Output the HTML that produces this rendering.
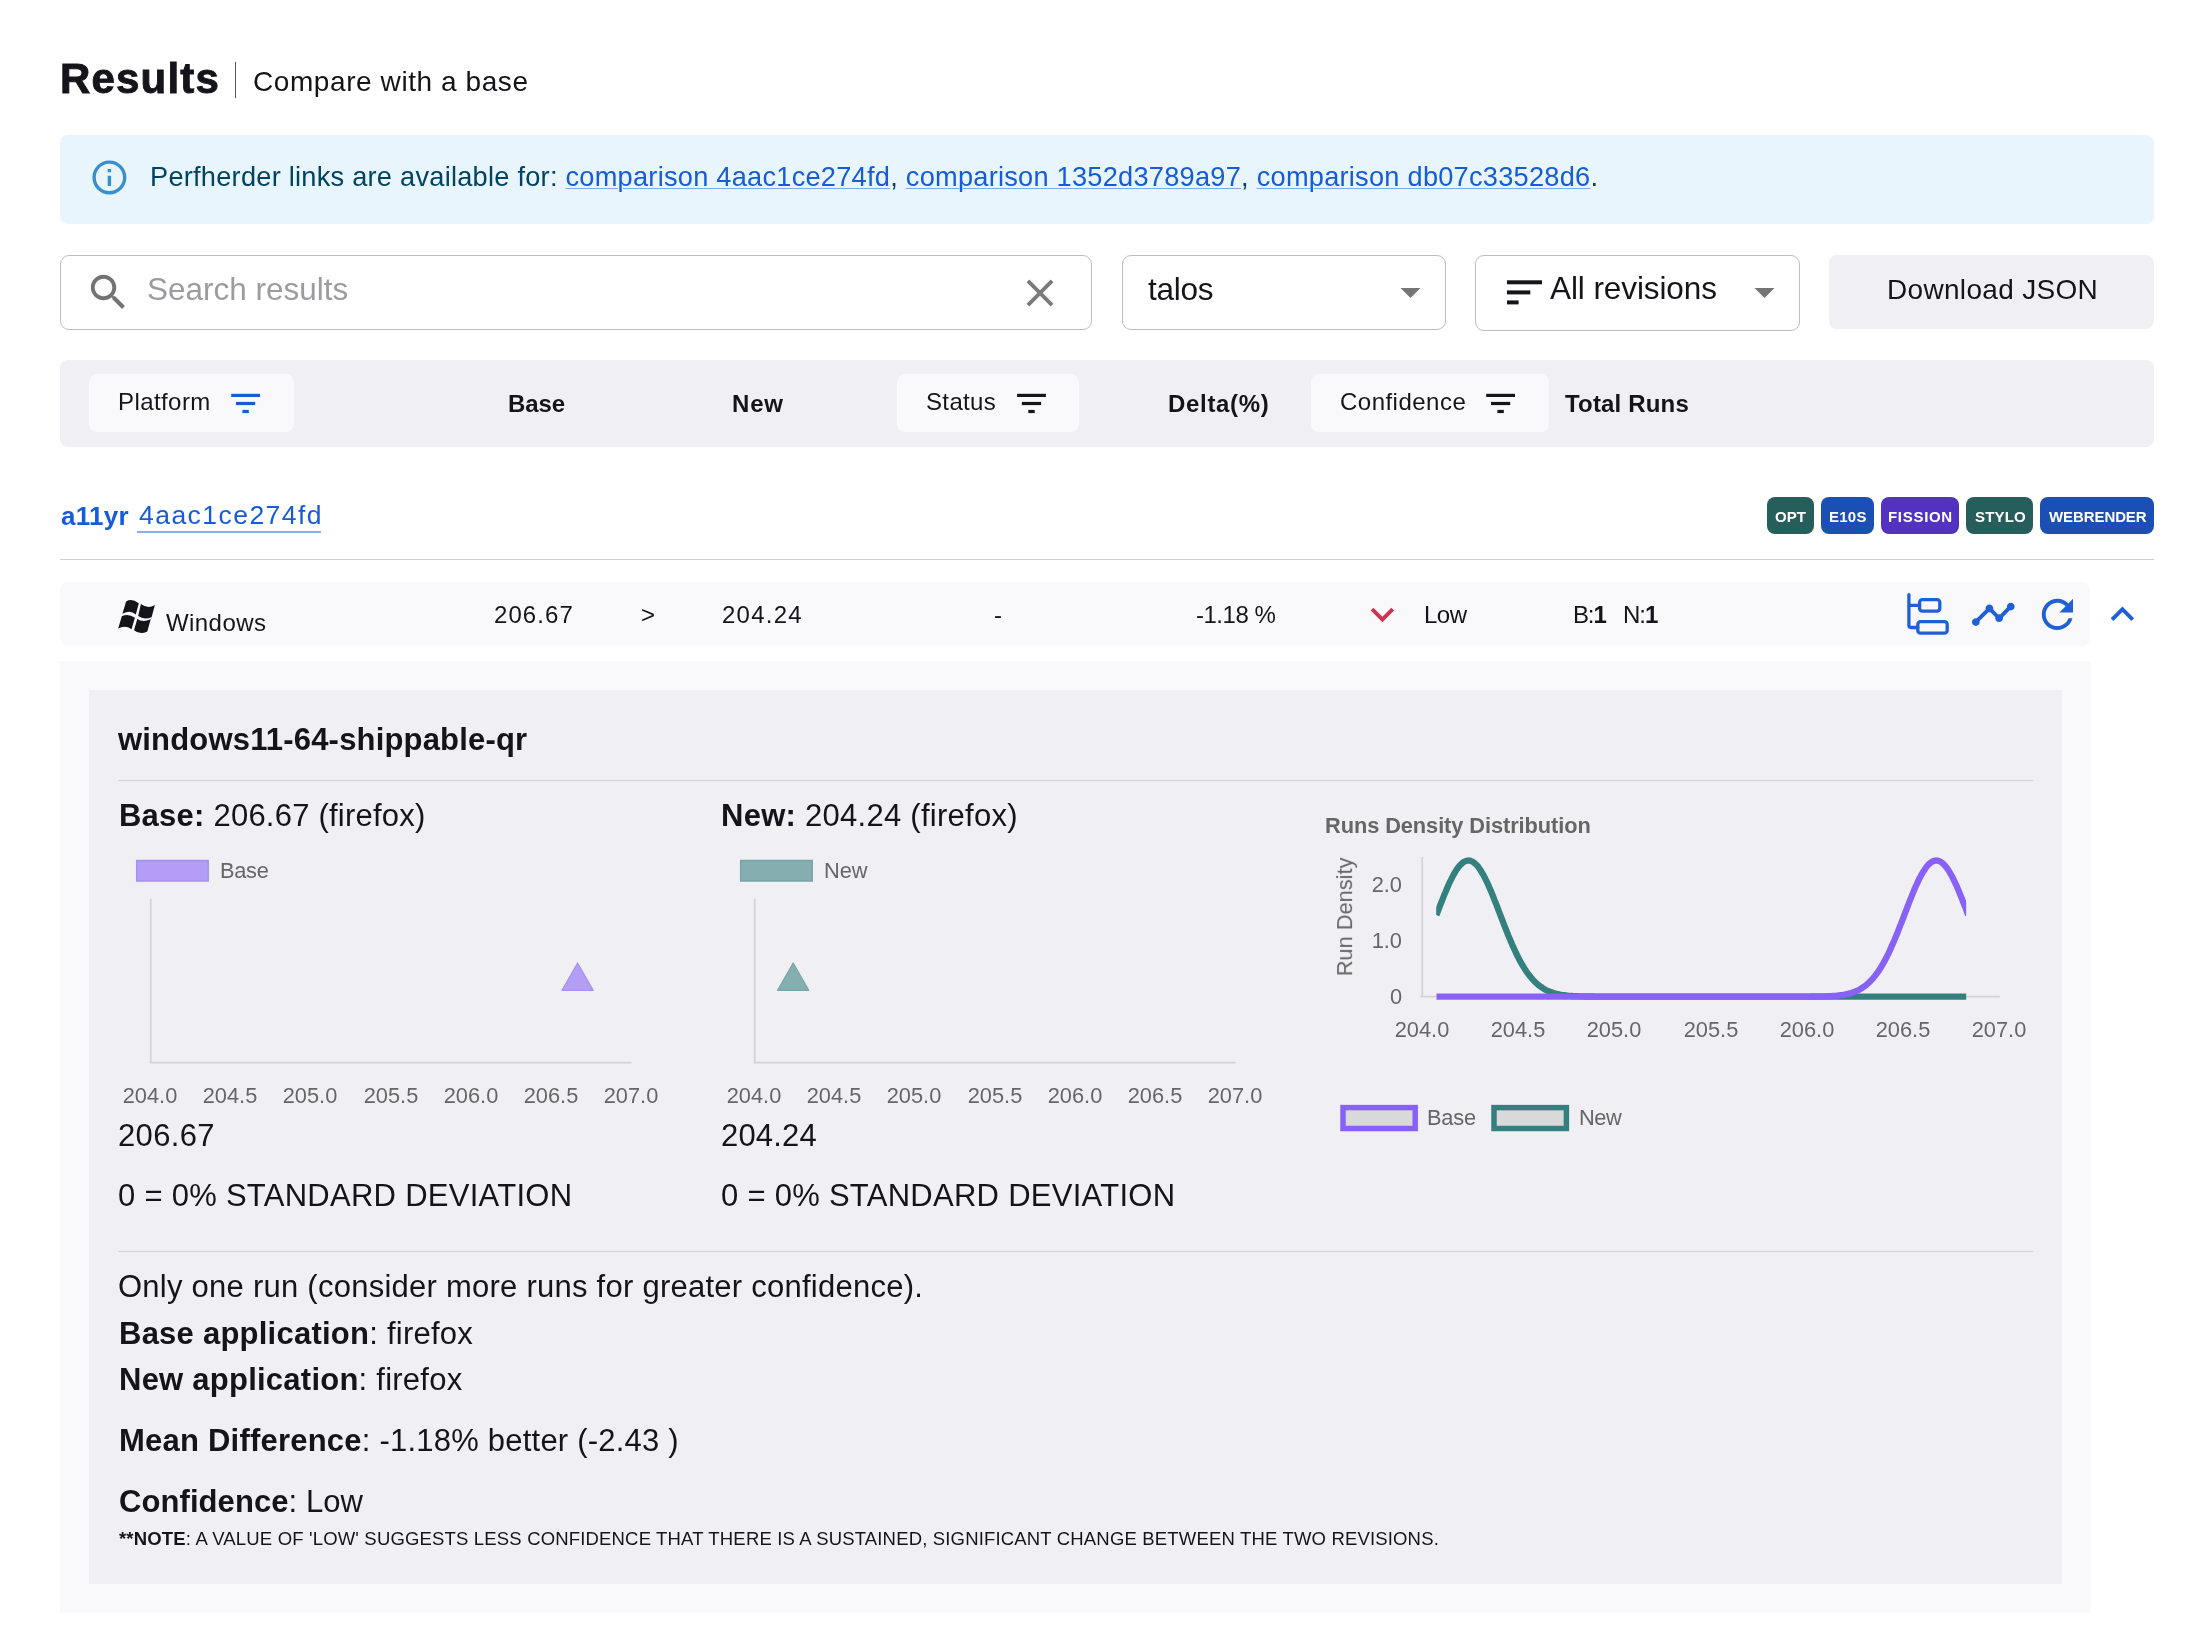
<!DOCTYPE html>
<html lang="en">
<head>
<meta charset="utf-8">
<title>Results - Compare with a base</title>
<style>
*{box-sizing:border-box;margin:0;padding:0}
html,body{width:2190px;height:1648px;background:#fff;overflow:hidden}
body{position:relative;font-family:"Liberation Sans",sans-serif;color:#15141a}
.b{position:absolute}
.t{position:absolute;white-space:nowrap;line-height:1;will-change:transform}
.tk{position:absolute;white-space:nowrap;line-height:1;will-change:transform;font-size:21.8px;color:#666;text-align:center;width:80px}
svg{position:absolute;overflow:visible}
</style>
</head>
<body>
<!-- title -->
<div class="b" style="left:234.9px;top:62px;width:1.4px;height:36px;background:#55555f"></div>
<!-- banner -->
<div class="b" style="left:60px;top:135px;width:2094px;height:89px;background:#e8f5fc;border-radius:8px"></div>
<svg style="left:88.6px;top:157.4px" width="40.8" height="40.8" viewBox="0 0 24 24"><path fill="#3a8ece" d="M11 7h2v2h-2zm0 4h2v6h-2zm1-9C6.48 2 2 6.48 2 12s4.48 10 10 10 10-4.48 10-10S17.52 2 12 2zm0 18c-4.41 0-8-3.59-8-8s3.59-8 8-8 8 3.59 8 8-3.59 8-8 8z"/></svg>
<!-- search row -->
<div class="b" style="left:60px;top:255px;width:1032px;height:74.5px;border:1.5px solid #bdbdc2;border-radius:9px"></div>
<svg style="left:85px;top:269.3px" width="46.8" height="46.8" viewBox="0 0 24 24"><path fill="#737373" d="M15.5 14h-.79l-.28-.27C15.41 12.59 16 11.11 16 9.5 16 5.91 13.09 3 9.5 3S3 5.91 3 9.5 5.91 16 9.5 16c1.61 0 3.09-.59 4.23-1.57l.27.28v.79l5 4.99L20.49 19zm-6 0C7.01 14 5 11.99 5 9.5S7.01 5 9.5 5 14 7.01 14 9.5 11.99 14 9.5 14z"/></svg>
<svg style="left:1017.2px;top:269.8px" width="46" height="46" viewBox="0 0 24 24"><path fill="#7a7a7a" d="M19 6.41 17.59 5 12 10.59 6.41 5 5 6.41 10.59 12 5 17.59 6.41 19 12 13.41 17.59 19 19 17.59 13.41 12z"/></svg>
<div class="b" style="left:1122px;top:255px;width:324px;height:74.5px;border:1.5px solid #bdbdc2;border-radius:9px"></div>
<svg style="left:0;top:0" width="2190" height="400"><polygon fill="#757575" points="1400.5,288 1420.5,288 1410.5,298"/><polygon fill="#757575" points="1754.5,288 1774.5,288 1764.5,298"/>
<rect x="1507" y="280.3" width="35" height="4" fill="#15141a"/><rect x="1507" y="290.4" width="23.3" height="4" fill="#15141a"/><rect x="1507" y="300.4" width="11.6" height="4" fill="#15141a"/></svg>
<div class="b" style="left:1475px;top:254.5px;width:325px;height:76px;border:1.5px solid #bdbdc2;border-radius:9px"></div>
<div class="b" style="left:1829px;top:255px;width:325px;height:73.7px;background:#f0f0f4;border-radius:8px"></div>
<!-- table header -->
<div class="b" style="left:60px;top:360px;width:2094px;height:87px;background:#f0f0f4;border-radius:8px"></div>
<div class="b" style="left:89px;top:374.2px;width:204.8px;height:57.8px;background:#f9f9fb;border-radius:8px"></div>
<div class="b" style="left:897px;top:374.2px;width:182px;height:57.8px;background:#f9f9fb;border-radius:8px"></div>
<div class="b" style="left:1311px;top:374.2px;width:238px;height:57.8px;background:#f9f9fb;border-radius:8px"></div>
<svg style="left:0;top:0" width="2190" height="450">
<g fill="#165cd6"><rect x="231.2" y="393.8" width="28.8" height="3.2"/><rect x="236" y="401.9" width="19.2" height="3.2"/><rect x="242.4" y="409.9" width="6.4" height="3.2"/></g>
<g fill="#15141a"><rect x="1017.1" y="393.8" width="28.8" height="3.2"/><rect x="1021.9" y="401.9" width="19.2" height="3.2"/><rect x="1028.3" y="409.9" width="6.4" height="3.2"/>
<rect x="1486.2" y="393.8" width="28.8" height="3.2"/><rect x="1491" y="401.9" width="19.2" height="3.2"/><rect x="1497.4" y="409.9" width="6.4" height="3.2"/></g></svg>
<!-- test header row -->
<div class="b" style="left:137px;top:530.6px;width:184px;height:2px;background:#8aaeea"></div>
<div class="b" style="left:1767px;top:497px;width:47px;height:36.8px;background:#265e5b;border-radius:8px"></div>
<div class="b" style="left:1821.2px;top:497px;width:52.8px;height:36.8px;background:#1c4fb4;border-radius:8px"></div>
<div class="b" style="left:1881.2px;top:497px;width:78px;height:36.8px;background:#5233c1;border-radius:8px"></div>
<div class="b" style="left:1966.1px;top:497px;width:67.2px;height:36.8px;background:#265e5b;border-radius:8px"></div>
<div class="b" style="left:2040.3px;top:497px;width:113.8px;height:36.8px;background:#1c4fb4;border-radius:8px"></div>
<div class="b" style="left:60px;top:558.5px;width:2094px;height:1.5px;background:#cfcfd8"></div>
<!-- result row -->
<div class="b" style="left:60px;top:582.2px;width:2029.7px;height:63.8px;background:#f9f9fb;border-radius:8px"></div>
<svg style="left:0;top:0" width="2190" height="660">
<g fill="#15141a">
<path d="M126.1 601.4Q131.75 598.1 138.8 603.2L135.8 614.5Q130.3 609.25 122.4 613.8Z"/>
<path d="M140.9 604.1Q147.9 609.25 154.9 605L151.6 617.2Q143.7 620.2 138.2 616Z"/>
<path d="M121.8 616.3Q128.05 613.15 134.9 617.8L131.5 629.3Q125.55 624.95 118.2 628.4Z"/>
<path d="M137.3 619Q142.8 623.05 150.7 619.3L147.3 631.4Q139.95 635.2 134 630.2Z"/>
</g>
<g fill="none" stroke="#1f60d6" stroke-width="3.3" stroke-linecap="round" stroke-linejoin="round">
<path d="M1908.9 594.6V625.3Q1908.9 627.5 1911.1 627.5H1917.8M1908.9 605.3H1919.6"/>
<rect x="1919.6" y="599.6" width="20.2" height="11.6" rx="2.7"/>
<rect x="1917.8" y="621.7" width="29.4" height="11.4" rx="2.7"/>
</g>
</svg>
<svg style="left:1359.1px;top:591px" width="46.8" height="46.8" viewBox="0 0 24 24"><path fill="#cc334f" d="M16.59 8.59 12 13.17 7.41 8.59 6 10l6 6 6-6z"/></svg>
<svg style="left:1970px;top:591px" width="46.6" height="46.6" viewBox="0 0 24 24"><path fill="#1f60d6" d="M23 8c0 1.1-.9 2-2 2-.18 0-.35-.02-.51-.07l-3.56 3.55c.05.16.07.34.07.52 0 1.1-.9 2-2 2s-2-.9-2-2c0-.18.02-.36.07-.52l-2.55-2.55c-.16.05-.34.07-.52.07s-.36-.02-.52-.07l-4.55 4.56c.05.16.07.33.07.51 0 1.1-.9 2-2 2s-2-.9-2-2 .9-2 2-2c.18 0 .35.02.51.07l4.56-4.55C8.02 9.36 8 9.18 8 9c0-1.1.9-2 2-2s2 .9 2 2c0 .18-.02.36-.07.52l2.55 2.55c.16-.05.34-.07.52-.07s.36.02.52.07l3.55-3.56C19.02 8.35 19 8.18 19 8c0-1.1.9-2 2-2s2 .9 2 2z"/></svg>
<svg style="left:2034.3px;top:590.65px" width="46.8" height="46.8" viewBox="0 0 24 24"><path fill="#1f60d6" d="M17.65 6.35C16.2 4.9 14.21 4 12 4c-4.42 0-7.99 3.58-7.99 8s3.57 8 7.99 8c3.73 0 6.84-2.55 7.73-6h-2.08c-.82 2.33-3.04 4-5.65 4-3.31 0-6-2.69-6-6s2.69-6 6-6c1.66 0 3.14.69 4.22 1.78L13 11h7V4z"/></svg>
<svg style="left:2098.9px;top:591.3px" width="46.8" height="46.8" viewBox="0 0 24 24"><path fill="#1f60d6" d="M12 8l-6 6 1.41 1.41L12 10.830l4.59 4.58L18 14z"/></svg>
<!-- expanded panel -->
<div class="b" style="left:60px;top:661px;width:2031px;height:951.5px;background:#f9f9fb"></div>
<div class="b" style="left:89px;top:690px;width:1973px;height:893.7px;background:#f0f0f4"></div>
<div class="b" style="left:118px;top:779.6px;width:1915px;height:1.5px;background:#d2d2d9"></div>
<div class="b" style="left:118px;top:1250.5px;width:1915px;height:1.5px;background:#d2d2d9"></div>
<svg style="left:0;top:0" width="2190" height="1648"><defs><clipPath id="dc"><rect x="1436.2" y="840" width="530" height="170"/></clipPath></defs>
<rect x="136.7" y="860.5" width="71.5" height="20.5" fill="#b39df5" stroke="#a88ff2" stroke-width="1.5"/>
<path d="M150.7 898.6V1063.6M149.7 1062.7H631.6" stroke="#d2d2d8" stroke-width="1.7" fill="none"/>
<polygon points="577.6,963 562.0,990.4 593.2,990.4" fill="#b39df5" stroke="#a88ff2" stroke-width="1.2" stroke-linejoin="round"/>
<rect x="740.7" y="860.5" width="71.5" height="20.5" fill="#85aeb0" stroke="#78a4a6" stroke-width="1.5"/>
<path d="M754.7 898.6V1063.6M753.7 1062.7H1235.6" stroke="#d2d2d8" stroke-width="1.7" fill="none"/>
<polygon points="793.2,963 777.6,990.4 808.8,990.4" fill="#85aeb0" stroke="#78a4a6" stroke-width="1.2" stroke-linejoin="round"/>
<path d="M1422.2 857V997.6M1420.2 996.6H1999.8" stroke="#d2d2d8" stroke-width="1.7" fill="none"/>
<polyline points="1436.4,915.1 1437.8,911.6 1439.1,908.1 1440.4,904.7 1441.8,901.3 1443.1,897.9 1444.4,894.6 1445.8,891.4 1447.1,888.3 1448.4,885.2 1449.7,882.3 1451.1,879.6 1452.4,876.9 1453.7,874.5 1455.1,872.2 1456.4,870.0 1457.7,868.1 1459.0,866.4 1460.4,864.9 1461.7,863.6 1463.0,862.5 1464.4,861.6 1465.7,861.0 1467.0,860.7 1468.4,860.5 1469.7,860.6 1471.0,861.0 1472.3,861.6 1473.7,862.4 1475.0,863.5 1476.3,864.7 1477.7,866.2 1479.0,868.0 1480.3,869.9 1481.6,872.0 1483.0,874.3 1484.3,876.7 1485.6,879.3 1487.0,882.1 1488.3,885.0 1489.6,888.0 1491.0,891.1 1492.3,894.4 1493.6,897.6 1494.9,901.0 1496.3,904.4 1497.6,907.8 1498.9,911.3 1500.3,914.8 1501.6,918.3 1502.9,921.7 1504.2,925.1 1505.6,928.5 1506.9,931.9 1508.2,935.2 1509.6,938.4 1510.9,941.6 1512.2,944.6 1513.6,947.6 1514.9,950.5 1516.2,953.3 1517.5,956.1 1518.9,958.7 1520.2,961.2 1521.5,963.6 1522.9,965.8 1524.2,968.0 1525.5,970.1 1526.8,972.1 1528.2,973.9 1529.5,975.7 1530.8,977.3 1532.2,978.9 1533.5,980.3 1534.8,981.7 1536.2,983.0 1537.5,984.2 1538.8,985.3 1540.1,986.3 1541.5,987.2 1542.8,988.1 1544.1,988.9 1545.5,989.7 1546.8,990.4 1548.1,991.0 1549.5,991.5 1550.8,992.1 1552.1,992.5 1553.4,993.0 1554.8,993.4 1556.1,993.7 1557.4,994.0 1558.8,994.3 1560.1,994.6 1561.4,994.8 1562.7,995.0 1564.1,995.2 1565.4,995.4 1566.7,995.5 1568.1,995.7 1569.4,995.8 1570.7,995.9 1572.1,996.0 1573.4,996.1 1574.7,996.1 1576.0,996.2 1577.4,996.2 1578.7,996.3 1580.0,996.3 1581.4,996.4 1582.7,996.4 1584.0,996.4 1585.3,996.5 1586.7,996.5 1588.0,996.5 1589.3,996.5 1590.7,996.5 1592.0,996.5 1593.3,996.5 1594.7,996.6 1596.0,996.6 1597.3,996.6 1598.6,996.6 1600.0,996.6 1601.3,996.6 1602.6,996.6 1604.0,996.6 1605.3,996.6 1606.6,996.6 1607.9,996.6 1609.3,996.6 1610.6,996.6 1611.9,996.6 1613.3,996.6 1614.6,996.6 1615.9,996.6 1617.3,996.6 1618.6,996.6 1619.9,996.6 1621.2,996.6 1622.6,996.6 1623.9,996.6 1625.2,996.6 1626.6,996.6 1627.9,996.6 1629.2,996.6 1630.5,996.6 1631.9,996.6 1633.2,996.6 1634.5,996.6 1635.9,996.6 1637.2,996.6 1638.5,996.6 1639.9,996.6 1641.2,996.6 1642.5,996.6 1643.8,996.6 1645.2,996.6 1646.5,996.6 1647.8,996.6 1649.2,996.6 1650.5,996.6 1651.8,996.6 1653.1,996.6 1654.5,996.6 1655.8,996.6 1657.1,996.6 1658.5,996.6 1659.8,996.6 1661.1,996.6 1662.5,996.6 1663.8,996.6 1665.1,996.6 1666.4,996.6 1667.8,996.6 1669.1,996.6 1670.4,996.6 1671.8,996.6 1673.1,996.6 1674.4,996.6 1675.7,996.6 1677.1,996.6 1678.4,996.6 1679.7,996.6 1681.1,996.6 1682.4,996.6 1683.7,996.6 1685.1,996.6 1686.4,996.6 1687.7,996.6 1689.0,996.6 1690.4,996.6 1691.7,996.6 1693.0,996.6 1694.4,996.6 1695.7,996.6 1697.0,996.6 1698.3,996.6 1699.7,996.6 1701.0,996.6 1702.3,996.6 1703.7,996.6 1705.0,996.6 1706.3,996.6 1707.7,996.6 1709.0,996.6 1710.3,996.6 1711.6,996.6 1713.0,996.6 1714.3,996.6 1715.6,996.6 1717.0,996.6 1718.3,996.6 1719.6,996.6 1720.9,996.6 1722.3,996.6 1723.6,996.6 1724.9,996.6 1726.3,996.6 1727.6,996.6 1728.9,996.6 1730.3,996.6 1731.6,996.6 1732.9,996.6 1734.2,996.6 1735.6,996.6 1736.9,996.6 1738.2,996.6 1739.6,996.6 1740.9,996.6 1742.2,996.6 1743.5,996.6 1744.9,996.6 1746.2,996.6 1747.5,996.6 1748.9,996.6 1750.2,996.6 1751.5,996.6 1752.9,996.6 1754.2,996.6 1755.5,996.6 1756.8,996.6 1758.2,996.6 1759.5,996.6 1760.8,996.6 1762.2,996.6 1763.5,996.6 1764.8,996.6 1766.1,996.6 1767.5,996.6 1768.8,996.6 1770.1,996.6 1771.5,996.6 1772.8,996.6 1774.1,996.6 1775.5,996.6 1776.8,996.6 1778.1,996.6 1779.4,996.6 1780.8,996.6 1782.1,996.6 1783.4,996.6 1784.8,996.6 1786.1,996.6 1787.4,996.6 1788.7,996.6 1790.1,996.6 1791.4,996.6 1792.7,996.6 1794.1,996.6 1795.4,996.6 1796.7,996.6 1798.1,996.6 1799.4,996.6 1800.7,996.6 1802.0,996.6 1803.4,996.6 1804.7,996.6 1806.0,996.6 1807.4,996.6 1808.7,996.6 1810.0,996.6 1811.4,996.6 1812.7,996.6 1814.0,996.6 1815.3,996.6 1816.7,996.6 1818.0,996.6 1819.3,996.6 1820.7,996.6 1822.0,996.6 1823.3,996.6 1824.6,996.6 1826.0,996.6 1827.3,996.6 1828.6,996.6 1830.0,996.6 1831.3,996.6 1832.6,996.6 1834.0,996.6 1835.3,996.6 1836.6,996.6 1837.9,996.6 1839.3,996.6 1840.6,996.6 1841.9,996.6 1843.3,996.6 1844.6,996.6 1845.9,996.6 1847.2,996.6 1848.6,996.6 1849.9,996.6 1851.2,996.6 1852.6,996.6 1853.9,996.6 1855.2,996.6 1856.6,996.6 1857.9,996.6 1859.2,996.6 1860.5,996.6 1861.9,996.6 1863.2,996.6 1864.5,996.6 1865.9,996.6 1867.2,996.6 1868.5,996.6 1869.8,996.6 1871.2,996.6 1872.5,996.6 1873.8,996.6 1875.2,996.6 1876.5,996.6 1877.8,996.6 1879.2,996.6 1880.5,996.6 1881.8,996.6 1883.1,996.6 1884.5,996.6 1885.8,996.6 1887.1,996.6 1888.5,996.6 1889.8,996.6 1891.1,996.6 1892.4,996.6 1893.8,996.6 1895.1,996.6 1896.4,996.6 1897.8,996.6 1899.1,996.6 1900.4,996.6 1901.8,996.6 1903.1,996.6 1904.4,996.6 1905.7,996.6 1907.1,996.6 1908.4,996.6 1909.7,996.6 1911.1,996.6 1912.4,996.6 1913.7,996.6 1915.0,996.6 1916.4,996.6 1917.7,996.6 1919.0,996.6 1920.4,996.6 1921.7,996.6 1923.0,996.6 1924.4,996.6 1925.7,996.6 1927.0,996.6 1928.3,996.6 1929.7,996.6 1931.0,996.6 1932.3,996.6 1933.7,996.6 1935.0,996.6 1936.3,996.6 1937.6,996.6 1939.0,996.6 1940.3,996.6 1941.6,996.6 1943.0,996.6 1944.3,996.6 1945.6,996.6 1947.0,996.6 1948.3,996.6 1949.6,996.6 1950.9,996.6 1952.3,996.6 1953.6,996.6 1954.9,996.6 1956.3,996.6 1957.6,996.6 1958.9,996.6 1960.2,996.6 1961.6,996.6 1962.9,996.6 1964.2,996.6 1965.6,996.6 1966.9,996.6 1968.2,996.6" fill="none" stroke="#34807f" stroke-width="6.3" stroke-linejoin="round" clip-path="url(#dc)"/>
<polyline points="1436.4,996.6 1437.8,996.6 1439.1,996.6 1440.4,996.6 1441.8,996.6 1443.1,996.6 1444.4,996.6 1445.8,996.6 1447.1,996.6 1448.4,996.6 1449.7,996.6 1451.1,996.6 1452.4,996.6 1453.7,996.6 1455.1,996.6 1456.4,996.6 1457.7,996.6 1459.0,996.6 1460.4,996.6 1461.7,996.6 1463.0,996.6 1464.4,996.6 1465.7,996.6 1467.0,996.6 1468.4,996.6 1469.7,996.6 1471.0,996.6 1472.3,996.6 1473.7,996.6 1475.0,996.6 1476.3,996.6 1477.7,996.6 1479.0,996.6 1480.3,996.6 1481.6,996.6 1483.0,996.6 1484.3,996.6 1485.6,996.6 1487.0,996.6 1488.3,996.6 1489.6,996.6 1491.0,996.6 1492.3,996.6 1493.6,996.6 1494.9,996.6 1496.3,996.6 1497.6,996.6 1498.9,996.6 1500.3,996.6 1501.6,996.6 1502.9,996.6 1504.2,996.6 1505.6,996.6 1506.9,996.6 1508.2,996.6 1509.6,996.6 1510.9,996.6 1512.2,996.6 1513.6,996.6 1514.9,996.6 1516.2,996.6 1517.5,996.6 1518.9,996.6 1520.2,996.6 1521.5,996.6 1522.9,996.6 1524.2,996.6 1525.5,996.6 1526.8,996.6 1528.2,996.6 1529.5,996.6 1530.8,996.6 1532.2,996.6 1533.5,996.6 1534.8,996.6 1536.2,996.6 1537.5,996.6 1538.8,996.6 1540.1,996.6 1541.5,996.6 1542.8,996.6 1544.1,996.6 1545.5,996.6 1546.8,996.6 1548.1,996.6 1549.5,996.6 1550.8,996.6 1552.1,996.6 1553.4,996.6 1554.8,996.6 1556.1,996.6 1557.4,996.6 1558.8,996.6 1560.1,996.6 1561.4,996.6 1562.7,996.6 1564.1,996.6 1565.4,996.6 1566.7,996.6 1568.1,996.6 1569.4,996.6 1570.7,996.6 1572.1,996.6 1573.4,996.6 1574.7,996.6 1576.0,996.6 1577.4,996.6 1578.7,996.6 1580.0,996.6 1581.4,996.6 1582.7,996.6 1584.0,996.6 1585.3,996.6 1586.7,996.6 1588.0,996.6 1589.3,996.6 1590.7,996.6 1592.0,996.6 1593.3,996.6 1594.7,996.6 1596.0,996.6 1597.3,996.6 1598.6,996.6 1600.0,996.6 1601.3,996.6 1602.6,996.6 1604.0,996.6 1605.3,996.6 1606.6,996.6 1607.9,996.6 1609.3,996.6 1610.6,996.6 1611.9,996.6 1613.3,996.6 1614.6,996.6 1615.9,996.6 1617.3,996.6 1618.6,996.6 1619.9,996.6 1621.2,996.6 1622.6,996.6 1623.9,996.6 1625.2,996.6 1626.6,996.6 1627.9,996.6 1629.2,996.6 1630.5,996.6 1631.9,996.6 1633.2,996.6 1634.5,996.6 1635.9,996.6 1637.2,996.6 1638.5,996.6 1639.9,996.6 1641.2,996.6 1642.5,996.6 1643.8,996.6 1645.2,996.6 1646.5,996.6 1647.8,996.6 1649.2,996.6 1650.5,996.6 1651.8,996.6 1653.1,996.6 1654.5,996.6 1655.8,996.6 1657.1,996.6 1658.5,996.6 1659.8,996.6 1661.1,996.6 1662.5,996.6 1663.8,996.6 1665.1,996.6 1666.4,996.6 1667.8,996.6 1669.1,996.6 1670.4,996.6 1671.8,996.6 1673.1,996.6 1674.4,996.6 1675.7,996.6 1677.1,996.6 1678.4,996.6 1679.7,996.6 1681.1,996.6 1682.4,996.6 1683.7,996.6 1685.1,996.6 1686.4,996.6 1687.7,996.6 1689.0,996.6 1690.4,996.6 1691.7,996.6 1693.0,996.6 1694.4,996.6 1695.7,996.6 1697.0,996.6 1698.3,996.6 1699.7,996.6 1701.0,996.6 1702.3,996.6 1703.7,996.6 1705.0,996.6 1706.3,996.6 1707.7,996.6 1709.0,996.6 1710.3,996.6 1711.6,996.6 1713.0,996.6 1714.3,996.6 1715.6,996.6 1717.0,996.6 1718.3,996.6 1719.6,996.6 1720.9,996.6 1722.3,996.6 1723.6,996.6 1724.9,996.6 1726.3,996.6 1727.6,996.6 1728.9,996.6 1730.3,996.6 1731.6,996.6 1732.9,996.6 1734.2,996.6 1735.6,996.6 1736.9,996.6 1738.2,996.6 1739.6,996.6 1740.9,996.6 1742.2,996.6 1743.5,996.6 1744.9,996.6 1746.2,996.6 1747.5,996.6 1748.9,996.6 1750.2,996.6 1751.5,996.6 1752.9,996.6 1754.2,996.6 1755.5,996.6 1756.8,996.6 1758.2,996.6 1759.5,996.6 1760.8,996.6 1762.2,996.6 1763.5,996.6 1764.8,996.6 1766.1,996.6 1767.5,996.6 1768.8,996.6 1770.1,996.6 1771.5,996.6 1772.8,996.6 1774.1,996.6 1775.5,996.6 1776.8,996.6 1778.1,996.6 1779.4,996.6 1780.8,996.6 1782.1,996.6 1783.4,996.6 1784.8,996.6 1786.1,996.6 1787.4,996.6 1788.7,996.6 1790.1,996.6 1791.4,996.6 1792.7,996.6 1794.1,996.6 1795.4,996.6 1796.7,996.6 1798.1,996.6 1799.4,996.6 1800.7,996.6 1802.0,996.6 1803.4,996.6 1804.7,996.6 1806.0,996.6 1807.4,996.6 1808.7,996.6 1810.0,996.6 1811.4,996.5 1812.7,996.5 1814.0,996.5 1815.3,996.5 1816.7,996.5 1818.0,996.5 1819.3,996.5 1820.7,996.4 1822.0,996.4 1823.3,996.4 1824.6,996.3 1826.0,996.3 1827.3,996.2 1828.6,996.2 1830.0,996.1 1831.3,996.1 1832.6,996.0 1834.0,995.9 1835.3,995.8 1836.6,995.7 1837.9,995.5 1839.3,995.4 1840.6,995.2 1841.9,995.0 1843.3,994.8 1844.6,994.6 1845.9,994.3 1847.2,994.0 1848.6,993.7 1849.9,993.4 1851.2,993.0 1852.6,992.5 1853.9,992.1 1855.2,991.5 1856.6,991.0 1857.9,990.4 1859.2,989.7 1860.5,988.9 1861.9,988.1 1863.2,987.2 1864.5,986.3 1865.9,985.3 1867.2,984.2 1868.5,983.0 1869.8,981.7 1871.2,980.3 1872.5,978.9 1873.8,977.3 1875.2,975.7 1876.5,973.9 1877.8,972.1 1879.2,970.1 1880.5,968.0 1881.8,965.8 1883.1,963.6 1884.5,961.2 1885.8,958.7 1887.1,956.1 1888.5,953.3 1889.8,950.5 1891.1,947.6 1892.4,944.6 1893.8,941.6 1895.1,938.4 1896.4,935.2 1897.8,931.9 1899.1,928.5 1900.4,925.1 1901.8,921.7 1903.1,918.3 1904.4,914.8 1905.7,911.3 1907.1,907.8 1908.4,904.4 1909.7,901.0 1911.1,897.6 1912.4,894.4 1913.7,891.1 1915.0,888.0 1916.4,885.0 1917.7,882.1 1919.0,879.3 1920.4,876.7 1921.7,874.3 1923.0,872.0 1924.4,869.9 1925.7,868.0 1927.0,866.2 1928.3,864.7 1929.7,863.5 1931.0,862.4 1932.3,861.6 1933.7,861.0 1935.0,860.6 1936.3,860.5 1937.6,860.7 1939.0,861.0 1940.3,861.6 1941.6,862.5 1943.0,863.6 1944.3,864.9 1945.6,866.4 1947.0,868.1 1948.3,870.0 1949.6,872.2 1950.9,874.5 1952.3,876.9 1953.6,879.6 1954.9,882.3 1956.3,885.2 1957.6,888.3 1958.9,891.4 1960.2,894.6 1961.6,897.9 1962.9,901.3 1964.2,904.7 1965.6,908.1 1966.9,911.6 1968.2,915.1" fill="none" stroke="#8861f7" stroke-width="6.3" stroke-linejoin="round" clip-path="url(#dc)"/>
<rect x="1343" y="1107.6" width="72.2" height="20.9" fill="#d9d9db" stroke="#8861f7" stroke-width="5.5"/>
<rect x="1494" y="1107.6" width="72.4" height="20.9" fill="#d9d9db" stroke="#34807f" stroke-width="5.5"/>
</svg>
<div class="tk" style="left:110.1px;top:1084.9px">204.0</div>
<div class="tk" style="left:190.2px;top:1084.9px">204.5</div>
<div class="tk" style="left:270.4px;top:1084.9px">205.0</div>
<div class="tk" style="left:350.6px;top:1084.9px">205.5</div>
<div class="tk" style="left:430.7px;top:1084.9px">206.0</div>
<div class="tk" style="left:510.9px;top:1084.9px">206.5</div>
<div class="tk" style="left:591.0px;top:1084.9px">207.0</div>
<div class="tk" style="left:714.1px;top:1084.9px">204.0</div>
<div class="tk" style="left:794.2px;top:1084.9px">204.5</div>
<div class="tk" style="left:874.4px;top:1084.9px">205.0</div>
<div class="tk" style="left:954.6px;top:1084.9px">205.5</div>
<div class="tk" style="left:1034.7px;top:1084.9px">206.0</div>
<div class="tk" style="left:1114.8px;top:1084.9px">206.5</div>
<div class="tk" style="left:1195.0px;top:1084.9px">207.0</div>
<div class="tk" style="left:1381.7px;top:1019.0px">204.0</div>
<div class="tk" style="left:1478.0px;top:1019.0px">204.5</div>
<div class="tk" style="left:1574.2px;top:1019.0px">205.0</div>
<div class="tk" style="left:1670.5px;top:1019.0px">205.5</div>
<div class="tk" style="left:1766.8px;top:1019.0px">206.0</div>
<div class="tk" style="left:1863.0px;top:1019.0px">206.5</div>
<div class="tk" style="left:1959.3px;top:1019.0px">207.0</div>
<div class="tk" style="left:1321.8px;top:873.7px;text-align:right">2.0</div>
<div class="tk" style="left:1321.8px;top:929.6px;text-align:right">1.0</div>
<div class="tk" style="left:1321.8px;top:985.9px;text-align:right">0</div>
<div class="tk" style="left:1264.5px;top:905.5px;width:160px;transform:rotate(-90deg)">Run Density</div>
<div class="t" id="title" style="left:60.3px;top:58.0px;font-size:42px;letter-spacing:1.17px;-webkit-text-stroke:0.9px #15141a;"><b>Results</b></div>
<div class="t" id="sub" style="left:253.0px;top:68.2px;font-size:28px;letter-spacing:0.58px;">Compare with a base</div>
<div class="t" id="banner" style="left:150.3px;top:163.1px;font-size:27.2px;letter-spacing:0.25px;color:#014361;">Perfherder links are available for: <span style="color:#165cd6;text-decoration:underline;text-decoration-thickness:1.1px;text-underline-offset:2px;text-decoration-color:rgba(22,92,214,.5)">comparison 4aac1ce274fd</span>, <span style="color:#165cd6;text-decoration:underline;text-decoration-thickness:1.1px;text-underline-offset:2px;text-decoration-color:rgba(22,92,214,.5)">comparison 1352d3789a97</span>, <span style="color:#165cd6;text-decoration:underline;text-decoration-thickness:1.1px;text-underline-offset:2px;text-decoration-color:rgba(22,92,214,.5)">comparison db07c33528d6</span>.</div>
<div class="t" id="search" style="left:146.5px;top:273.6px;font-size:31.5px;letter-spacing:-0.01px;color:#9c9ca0;">Search results</div>
<div class="t" id="talos" style="left:1147.7px;top:273.6px;font-size:31.5px;letter-spacing:-0.23px;">talos</div>
<div class="t" id="allrev" style="left:1550.3px;top:273.1px;font-size:31.5px;letter-spacing:-0.09px;">All revisions</div>
<div class="t" id="dl" style="left:1886.7px;top:275.8px;font-size:28px;letter-spacing:0.32px;">Download JSON</div>
<div class="t" id="hplat" style="left:118.3px;top:390.1px;font-size:24px;letter-spacing:0.42px;">Platform</div>
<div class="t" id="hstat" style="left:926.2px;top:390.1px;font-size:24px;letter-spacing:0.35px;">Status</div>
<div class="t" id="hconf" style="left:1340.2px;top:390.1px;font-size:24px;letter-spacing:0.48px;">Confidence</div>
<div class="t" id="hbase" style="left:507.8px;top:391.8px;font-size:24px;letter-spacing:-0.08px;"><b>Base</b></div>
<div class="t" id="hnew" style="left:731.7px;top:391.8px;font-size:24px;letter-spacing:0.81px;"><b>New</b></div>
<div class="t" id="hdelta" style="left:1168.0px;top:391.8px;font-size:24px;letter-spacing:0.68px;"><b>Delta(%)</b></div>
<div class="t" id="hruns" style="left:1564.8px;top:391.8px;font-size:24px;letter-spacing:0.17px;"><b>Total Runs</b></div>
<div class="t" id="a11yr" style="left:60.6px;top:502.7px;font-size:26px;letter-spacing:0.25px;color:#165cd6;"><b>a11yr</b></div>
<div class="t" id="hash" style="left:138.5px;top:502.3px;font-size:26.5px;letter-spacing:1.46px;color:#165cd6;">4aac1ce274fd</div>
<div class="t" id="bopt" style="left:1775.0px;top:509.3px;font-size:15px;letter-spacing:0.06px;color:#ffffff;"><b>OPT</b></div>
<div class="t" id="be10s" style="left:1828.7px;top:509.3px;font-size:15px;letter-spacing:0.23px;color:#ffffff;"><b>E10S</b></div>
<div class="t" id="bfis" style="left:1888.2px;top:509.3px;font-size:15px;letter-spacing:0.70px;color:#ffffff;"><b>FISSION</b></div>
<div class="t" id="bsty" style="left:1974.7px;top:509.3px;font-size:15px;letter-spacing:0.17px;color:#ffffff;"><b>STYLO</b></div>
<div class="t" id="bweb" style="left:2049.0px;top:509.3px;font-size:15px;letter-spacing:-0.09px;color:#ffffff;"><b>WEBRENDER</b></div>
<div class="t" id="rwin" style="left:166.0px;top:610.5px;font-size:24px;letter-spacing:0.43px;">Windows</div>
<div class="t" id="rbase" style="left:494.3px;top:603.0px;font-size:24px;letter-spacing:1.07px;">206.67</div>
<div class="t" id="rgt" style="left:640.5px;top:603.0px;font-size:24px;">&gt;</div>
<div class="t" id="rnew" style="left:721.7px;top:603.0px;font-size:24px;letter-spacing:1.25px;">204.24</div>
<div class="t" id="rdash" style="left:994.0px;top:603.0px;font-size:24px;">-</div>
<div class="t" id="rdelta" style="left:1196.3px;top:602.5px;font-size:24px;letter-spacing:-0.49px;">-1.18 %</div>
<div class="t" id="rlow" style="left:1424.2px;top:602.5px;font-size:24px;letter-spacing:-0.49px;">Low</div>
<div class="t" id="rb" style="left:1572.9px;top:602.5px;font-size:24px;letter-spacing:-1.15px;">B:<b>1</b></div>
<div class="t" id="rn" style="left:1622.7px;top:602.5px;font-size:24px;letter-spacing:-1.05px;">N:<b>1</b></div>
<div class="t" id="pname" style="left:118.4px;top:723.6px;font-size:31px;letter-spacing:0.18px;"><b>windows11-64-shippable-qr</b></div>
<div class="t" id="pbase" style="left:118.8px;top:799.5px;font-size:31px;letter-spacing:0.23px;"><b>Base:</b> 206.67 (firefox)</div>
<div class="t" id="pnew" style="left:721.3px;top:799.5px;font-size:31px;letter-spacing:0.27px;"><b>New:</b> 204.24 (firefox)</div>
<div class="t" id="lgbase" style="left:219.9px;top:860.0px;font-size:21.8px;letter-spacing:-0.29px;color:#666666;">Base</div>
<div class="t" id="lgnew" style="left:823.5px;top:860.0px;font-size:21.8px;letter-spacing:-0.09px;color:#666666;">New</div>
<div class="t" id="vbase" style="left:117.7px;top:1119.9px;font-size:31px;letter-spacing:0.35px;">206.67</div>
<div class="t" id="vnew" style="left:720.8px;top:1119.9px;font-size:31px;letter-spacing:0.17px;">204.24</div>
<div class="t" id="sdbase" style="left:117.7px;top:1180.0px;font-size:31px;letter-spacing:0.27px;">0 = 0% STANDARD DEVIATION</div>
<div class="t" id="sdnew" style="left:721.2px;top:1180.0px;font-size:31px;letter-spacing:0.27px;">0 = 0% STANDARD DEVIATION</div>
<div class="t" id="only" style="left:118.2px;top:1271.1px;font-size:31px;letter-spacing:0.25px;">Only one run (consider more runs for greater confidence).</div>
<div class="t" id="bapp" style="left:118.7px;top:1318.1px;font-size:31px;letter-spacing:0.24px;"><b>Base application</b>: firefox</div>
<div class="t" id="napp" style="left:118.7px;top:1364.2px;font-size:31px;letter-spacing:0.24px;"><b>New application</b>: firefox</div>
<div class="t" id="mdiff" style="left:118.7px;top:1424.9px;font-size:31px;letter-spacing:0.22px;"><b>Mean Difference</b>: -1.18% better (-2.43 )</div>
<div class="t" id="conf" style="left:118.9px;top:1486.1px;font-size:31px;letter-spacing:0.08px;"><b>Confidence</b>: Low</div>
<div class="t" id="note" style="left:118.8px;top:1529.5px;font-size:18.5px;letter-spacing:0.17px;"><b>**NOTE</b>: A VALUE OF 'LOW' SUGGESTS LESS CONFIDENCE THAT THERE IS A SUSTAINED, SIGNIFICANT CHANGE BETWEEN THE TWO REVISIONS.</div>
<div class="t" id="dtitle" style="left:1325.4px;top:814.9px;font-size:21.8px;letter-spacing:-0.08px;color:#666666;"><b>Runs Density Distribution</b></div>
<div class="t" id="dlbase" style="left:1426.7px;top:1106.9px;font-size:21.8px;letter-spacing:-0.22px;color:#666666;">Base</div>
<div class="t" id="dlnew" style="left:1578.6px;top:1106.9px;font-size:21.8px;letter-spacing:-0.43px;color:#666666;">New</div>
</body>
</html>
